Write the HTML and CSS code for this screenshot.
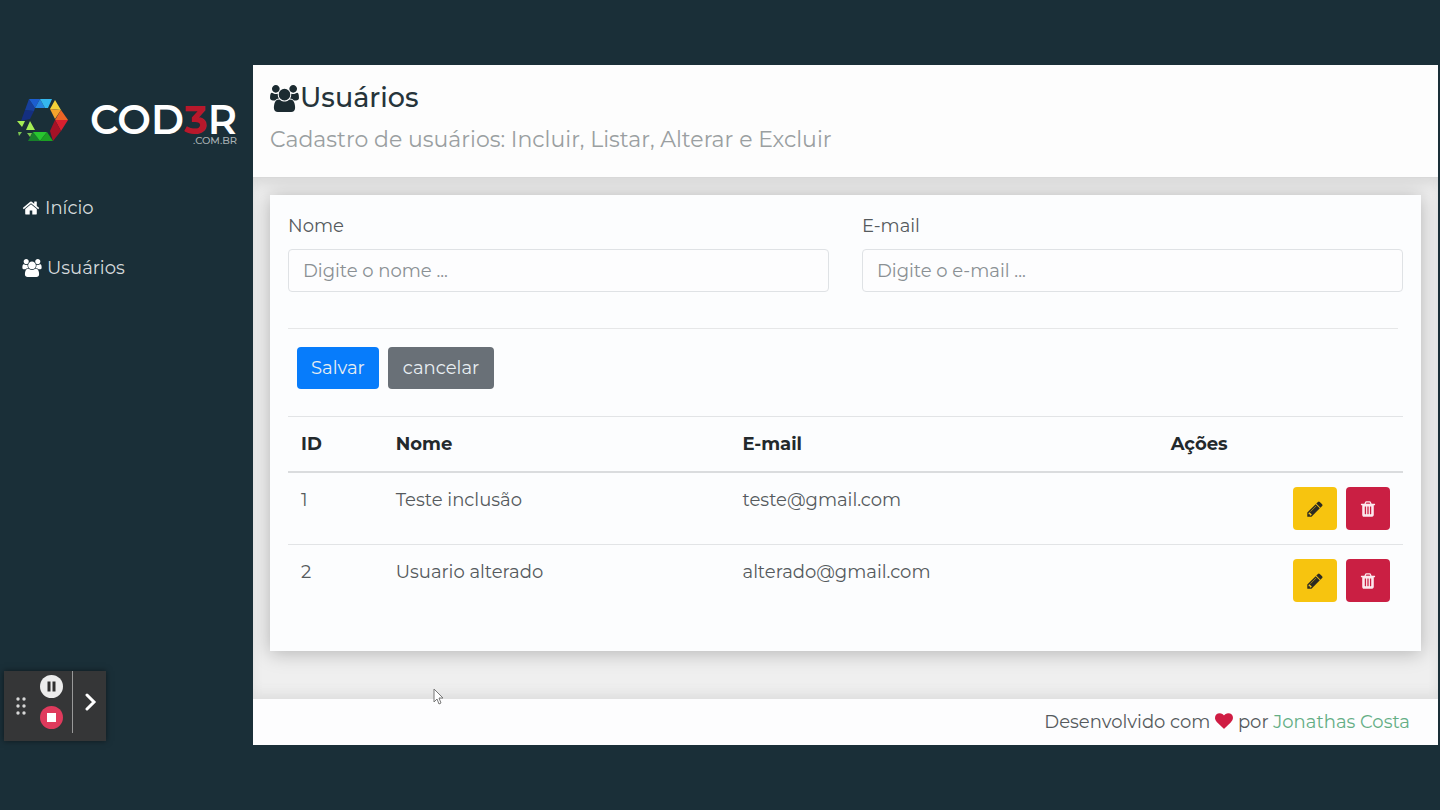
FILE: index.html
```
<!DOCTYPE html>
<html lang="pt-BR">
<head>
<meta charset="utf-8">
<title>Usuários</title>
<link rel="stylesheet" href="styles.css">
</head>
<body>
<svg class="sprite" aria-hidden="true">
  <symbol id="home" viewBox="0 0 1792 1792"><path d="M1472 992v480q0 26-19 45t-45 19h-384v-384h-256v384h-384q-26 0-45-19t-19-45v-480q0-1 .5-3t.5-3l575-474 575 474q1 2 1 6zm223-69l-62 74q-8 9-21 11h-3q-13 0-21-7l-692-577-692 577q-12 8-24 7-13-2-21-11l-62-74q-8-10-7-23.500t11-21.500l719-599q32-26 76-26t76 26l244 204v-195q0-14 9-23t23-9h192q14 0 23 9t9 23v408l219 182q10 8 11 21.500t-7 23.500z"/></symbol>
  <symbol id="users" viewBox="64 0 1920 1792"><path d="M657 896q-162 5-265 128h-134q-82 0-138-40.500t-56-118.500q0-353 124-353 6 0 43.500 21t97.500 42.500 119 21.500q67 0 133-23-5 37-5 66 0 139 81 256zm1071 637q0 120-73 189.500t-194 69.500h-874q-121 0-194-69.500t-73-189.500q0-53 3.500-103.500t14-109 26.500-108.500 43-97.500 62-81 85.500-53.500 111.500-20q10 0 43 21.500t73 48 107 48 135 21.500 135-21.500 107-48 73-48 43-21.500q61 0 111.500 20t85.500 53.500 62 81 43 97.500 26.500 108.500 14 109 3.500 103.500zm-1024-1277q0 106-75 181t-181 75-181-75-75-181 75-181 181-75 181 75 75 181zm704 384q0 159-112.500 271.500t-271.500 112.500-271.500-112.500-112.500-271.500 112.500-271.500 271.500-112.500 271.500 112.500 112.500 271.500zm576 225q0 78-56 118.500t-138 40.500h-134q-103-123-265-128 81-117 81-256 0-29-5-66 66 23 133 23 59 0 119-21.500t97.500-42.500 43.500-21q124 0 124 353zm-128-609q0 106-75 181t-181 75-181-75-75-181 75-181 181-75 181 75 75 181z"/></symbol>
  <symbol id="pencil" viewBox="0 0 1792 1792"><path d="M491 1536l91-91-235-235-91 91v107h128v128h107zm523-928q0-22-22-22-10 0-17 7l-542 542q-7 7-7 17 0 22 22 22 10 0 17-7l542-542q7-7 7-17zm-54-192l416 416-832 832h-416v-416zm683 96q0 53-37 90l-166 166-416-416 166-165q36-38 90-38 53 0 91 38l235 234q37 39 37 91z"/></symbol>
  <symbol id="trash" viewBox="0 0 1792 1792"><path d="M704 1376v-704q0-14-9-23t-23-9h-64q-14 0-23 9t-9 23v704q0 14 9 23t23 9h64q14 0 23-9t9-23zm256 0v-704q0-14-9-23t-23-9h-64q-14 0-23 9t-9 23v704q0 14 9 23t23 9h64q14 0 23-9t9-23zm256 0v-704q0-14-9-23t-23-9h-64q-14 0-23 9t-9 23v704q0 14 9 23t23 9h64q14 0 23-9t9-23zm-544-992h448l-48-117q-7-9-17-11h-317q-10 2-17 11zm928 32v64q0 14-9 23t-23 9h-96v948q0 83-47 143.500t-113 60.500h-832q-66 0-113-58.500t-47-141.500v-952h-96q-14 0-23-9t-9-23v-64q0-14 9-23t23-9h309l70-167q15-37 54-63t79-26h320q40 0 79 26t54 63l70 167h309q14 0 23 9t9 23z"/></symbol>
  <symbol id="heart" viewBox="0 0 1792 1792"><path d="M896 1664q-26 0-44-18l-624-602q-10-8-27.500-26t-55.500-65.500-68-97.500-53.500-121-23.500-138q0-220 127-344t351-124q62 0 126.500 21.500t120 58 95.500 68.500 76 68q36-36 76-68t95.500-68.500 120-58 126.500-21.500q224 0 351 124t127 344q0 221-229 450l-623 600q-18 18-44 18z"/></symbol>
</svg>
<div class="app">
  <aside class="sidebar">
    <a class="logo" href="#">
      <svg class="logo-mark" viewBox="0 0 52 46" aria-hidden="true">
        <path fill="#142f80" d="M4 23l4-11 9 1-4 8z"/>
        <path fill="#173f9c" d="M8 12l4-11 6 9-1 3z"/>
        <path fill="#1c5ed0" d="M12 1h11l-5 9z"/>
        <path fill="#2785e0" d="M18 10l5-9 5 9z"/>
        <path fill="#34b7ee" d="M23 1h12l-4 9h-3z"/>
        <path fill="#f4d238" d="M38 2l6 10-11-1z"/>
        <path fill="#f3a32c" d="M33 11l11 1-6 9z"/>
        <path fill="#ec6426" d="M44 12l7 10H38z"/>
        <path fill="#d8202f" d="M38 22h13l-7 11z"/>
        <path fill="#a51226" d="M38 22l6 11-8 10-3-10z"/>
        <path fill="#18802a" d="M16 34l7 9H11z"/>
        <path fill="#28c52f" d="M16 34h14l-7 9z"/>
        <path fill="#1ca023" d="M30 34l6 9H23z"/>
        <path fill="#a5ed55" d="M0 23h8l-3 6zM13 23l5 9H9z"/>
        <path fill="#7bc653" d="M1 34h4l-3 4zM10 35h5l-2 4z"/>
      </svg>
      <span class="logo-text"><span class="logo-name">COD<b>3</b>R</span><span class="logo-domain">.COM.BR</span></span>
    </a>
    <nav class="menu">
      <a href="#"><svg class="icon" aria-hidden="true"><use href="#home"/></svg>Início</a>
      <a href="#"><svg class="icon users" aria-hidden="true"><use href="#users"/></svg>Usuários</a>
    </nav>
  </aside>
  <div class="page">
    <header class="header">
      <h1><svg class="title-icon" aria-hidden="true"><use href="#users"/></svg>Usuários</h1>
      <p>Cadastro de usuários: Incluir, Listar, Alterar e Excluir</p>
    </header>
    <main class="main">
      <section class="card">
        <form>
          <div class="fields">
            <div class="field"><label for="nome">Nome</label><input id="nome" type="text" placeholder="Digite o nome ..."></div>
            <div class="field"><label for="email">E-mail</label><input id="email" type="text" placeholder="Digite o e-mail ..."></div>
          </div>
          <hr>
          <div class="buttons">
            <button class="btn primary" type="button">Salvar</button>
            <button class="btn secondary" type="button">cancelar</button>
          </div>
        </form>
        <table>
          <colgroup><col class="c-id"><col class="c-name"><col class="c-mail"><col></colgroup>
          <thead><tr><th>ID</th><th>Nome</th><th>E-mail</th><th>Ações</th></tr></thead>
          <tbody>
            <tr><td>1</td><td>Teste inclusão</td><td>teste@gmail.com</td>
              <td><div class="actions"><button class="act edit" type="button" aria-label="Editar"><svg class="icon" aria-hidden="true"><use href="#pencil"/></svg></button><button class="act delete" type="button" aria-label="Excluir"><svg class="icon" aria-hidden="true"><use href="#trash"/></svg></button></div></td></tr>
            <tr><td>2</td><td>Usuario alterado</td><td>alterado@gmail.com</td>
              <td><div class="actions"><button class="act edit" type="button" aria-label="Editar"><svg class="icon" aria-hidden="true"><use href="#pencil"/></svg></button><button class="act delete" type="button" aria-label="Excluir"><svg class="icon" aria-hidden="true"><use href="#trash"/></svg></button></div></td></tr>
          </tbody>
        </table>
      </section>
    </main>
    <footer class="footer"><span>Desenvolvido com <svg class="heart" aria-hidden="true"><use href="#heart"/></svg> por <a href="#">Jonathas Costa</a></span></footer>
  </div>
</div>
<div class="recorder">
  <svg class="grip" viewBox="0 0 10 18" aria-hidden="true"><g fill="#d8d8d8"><circle cx="2" cy="2" r="1.700"/><circle cx="8" cy="2" r="1.700"/><circle cx="2" cy="9" r="1.700"/><circle cx="8" cy="9" r="1.700"/><circle cx="2" cy="16" r="1.700"/><circle cx="8" cy="16" r="1.700"/></g></svg>
  <div class="rec-controls">
    <button type="button" aria-label="Pausar"><svg viewBox="0 0 23 23"><circle cx="11.500" cy="11.500" r="11.500" fill="#ececec"/><path fill="#303030" d="M7.500 6.500h3v10h-3zM12.500 6.500h3v10h-3z"/></svg></button>
    <button type="button" aria-label="Parar"><svg viewBox="0 0 23 23"><circle cx="11.500" cy="11.500" r="11.500" fill="#df3a5c"/><path fill="#fff" d="M7 7h9v9H7z"/></svg></button>
  </div>
  <button class="rec-next" type="button" aria-label="Expandir"><svg viewBox="0 0 12 18"><path d="M2 2l7 7-7 7" fill="none" stroke="#fff" stroke-width="3" stroke-linecap="round"/></svg></button>
</div>
<svg class="cursor" viewBox="0 0 12 18" aria-hidden="true"><path d="M1 1v13l3-3 2 5 2-1-2-5h4z" fill="#fff" stroke="#777"/></svg>
</body>
</html>
```
FILE: styles.css
```
* { box-sizing: border-box; }
body {
  margin: 0;
  min-height: 100vh;
  display: flex;
  padding: 65px 2px 65px 0;
  background: #1a2f38;
  color: #555a5d;
  font: 18px/26px Montserrat, Inter, "Noto Sans", sans-serif;
}
a { text-decoration: none; }
button { font: inherit; border: 0; padding: 0; }
.sprite { position: absolute; width: 0; height: 0; }
.icon { width: 18px; height: 18px; fill: currentColor; flex: none; }
.app { flex: 1; display: flex; min-width: 0; }

.sidebar { width: 253px; flex: none; padding: 33px 16px 0 17px; }
.logo { display: flex; align-items: flex-start; gap: 4px; }
.logo-mark { width: 52px; height: 46px; flex: none; }
.logo-text {
  flex: 1;
  display: flex;
  flex-direction: column;
  align-items: flex-end;
  padding-top: 5px;
  color: #fff;
  font-weight: 600;
}
.logo-name { font-size: 40px; line-height: 34px; }
.logo-name b { color: #b8182b; font-weight: 700; }
.logo-domain { font-size: 10px; line-height: 8px; color: #a9b2b5; font-weight: 500; }
.menu { display: flex; flex-direction: column; gap: 34px; padding: 50px 5px 0; }
.menu a { display: flex; align-items: center; gap: 5px; color: #d5dadc; }
.menu .icon { fill: #fff; }
.menu .users { width: 20px; }

.page { flex: 1; min-width: 0; display: flex; flex-direction: column; background: #efefef; }
.header { background: #fdfdfd; padding: 15px 17px 20px; border-bottom: 1px solid #d8d8d8; }
h1 { margin: 0; display: flex; align-items: center; gap: 1px; font-size: 27px; line-height: 36px; font-weight: 500; color: #26343a; }
.title-icon { width: 29px; height: 27px; fill: #1c2b31; }
.header p { margin: 7px 0 0; font-size: 22px; line-height: 34px; font-weight: 400; color: #9a9fa1; }
.main { flex: 1; padding: 17px; overflow: hidden; box-shadow: inset 0 -10px 14px -6px #dcdcdc, inset 0 10px 14px -4px #d8d8d8; }
.card { background: #fcfdfe; padding: 18px 18px 35px; box-shadow: 0 2px 18px rgba(0, 0, 0, .25); }
.fields { display: grid; grid-template-columns: 1fr 1fr; gap: 33px; }
.field { display: flex; flex-direction: column; gap: 10px; }
input {
  width: 100%;
  height: 43px;
  padding: 0 14px;
  border: 1px solid #dfe2e5;
  border-radius: 4px;
  background: #fdfdfe;
  color: #555a5d;
  font: inherit;
}
input::placeholder { color: #8a9094; opacity: 1; }
hr { border: 0; border-top: 1px solid #e6e7e8; margin: 36px 5px 18px 0; }
.buttons { display: flex; gap: 9px; padding-left: 9px; margin-bottom: 27px; }
.btn { height: 42px; padding: 0 15px; border-radius: 4px; color: #e8eef2; }
.primary { padding: 0 14px; background: #077cfb; }
.secondary { background: #697077; }
table { width: 100%; table-layout: fixed; border-collapse: collapse; }
.c-id { width: 8.5%; }
.c-name { width: 31.1%; }
.c-mail { width: 38.4%; }
th, td { text-align: left; vertical-align: top; padding: 14px 13px; border-top: 1px solid #e2e4e6; }
th { color: #23292c; font-weight: 700; border-bottom: 2px solid #dadcde; }
.actions { display: flex; justify-content: flex-end; gap: 9px; }
.act { display: flex; align-items: center; justify-content: center; width: 44px; height: 43px; border-radius: 4px; }
.edit { background: #f7c40f; color: #2b2a22; }
.delete { background: #ca1f43; color: #fbe9ee; }
.footer { background: #fdfdfe; padding: 10px 28px; text-align: right; }
.footer a { color: #64ae85; }
.heart { width: 18px; height: 18px; fill: #cf1c43; vertical-align: -2px; }

.recorder {
  position: fixed;
  left: 4px;
  bottom: 69px;
  display: flex;
  align-items: center;
  width: 102px;
  height: 70px;
  padding-left: 12px;
  background: #353637;
  box-shadow: 0 0 6px rgba(0, 0, 0, .5);
}
.recorder button { display: block; background: none; }
.recorder svg { display: block; }
.grip { width: 10px; height: 18px; }
.rec-controls { display: flex; flex-direction: column; gap: 8px; padding: 4px 9px 12px 14px; }
.rec-controls svg { width: 23px; height: 23px; }
.rec-next { align-self: flex-start; height: 62px; padding-left: 12px; border-left: 1px solid #999; }
.rec-next svg { width: 12px; height: 18px; }
.cursor { position: fixed; left: 433px; top: 688px; width: 12px; height: 18px; }
```
